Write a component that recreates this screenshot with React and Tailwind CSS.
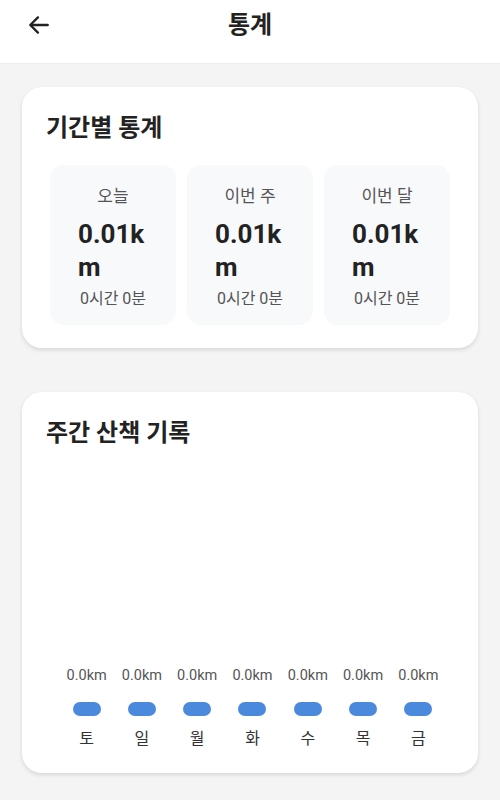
import React from "react";

const font = { fontFamily: "Roboto, 'Noto Sans CJK KR', sans-serif" };

const periods = [
    { label: "오늘", distance: "0.01km", time: "0시간 0분" },
    { label: "이번 주", distance: "0.01km", time: "0시간 0분" },
    { label: "이번 달", distance: "0.01km", time: "0시간 0분" },
];

const days = ["토", "일", "월", "화", "수", "목", "금"];

const PeriodBox = ({ label, distance, time }) => (
    <div className="flex flex-col items-center bg-[#f8f9fb] rounded-[14px] px-[28px] pt-[19px] pb-[15px]">
        <span className="text-[17px] leading-[24px] text-[#555]">{label}</span>
        <span className="mt-[10px] text-[26px] leading-[33px] font-bold text-[#222] break-all">
            {distance}
        </span>
        <span className="mt-[4px] text-[16px] leading-[22px] text-[#555] whitespace-nowrap">{time}</span>
    </div>
);

const App = () => {
    return (
        <div className="min-h-[800px] bg-[#f4f4f4]" style={font}>
            {/* Header */}
            <header className="relative h-[64px] bg-white border-b border-[#ececec] flex items-center justify-center">
                <button className="absolute left-[26px] top-[12px] text-[#222]">
                    <svg width="26" height="26" viewBox="0 0 24 24" fill="none" stroke="currentColor" strokeWidth="2.2" strokeLinecap="round" strokeLinejoin="round">
                        <path d="M20 12H4.5" />
                        <path d="M11 5l-7 7 7 7" />
                    </svg>
                </button>
                <h1 className="text-[24px] leading-[32px] font-bold text-[#222] -mt-[13px]">통계</h1>
            </header>

            <main className="px-[22px] pt-[23px] flex flex-col gap-[44px]">
                {/* 기간별 통계 */}
                <section className="bg-white rounded-[20px] shadow-[0_2px_4px_rgba(0,0,0,0.12)] px-[24px] pt-[25px] pb-[23px]">
                    <h2 className="text-[24px] leading-[32px] font-bold text-[#222]">기간별 통계</h2>
                    <div className="mt-[21px] mx-[4px] grid grid-cols-3 gap-[11px]">
                        {periods.map((p) => (
                            <PeriodBox key={p.label} {...p} />
                        ))}
                    </div>
                </section>

                {/* 주간 산책 기록 */}
                <section className="bg-white rounded-[20px] shadow-[0_2px_4px_rgba(0,0,0,0.12)] px-[24px] pt-[25px] pb-[24px]">
                    <h2 className="text-[24px] leading-[32px] font-bold text-[#222]">주간 산책 기록</h2>
                    <div className="h-[300px] pl-[13px] pr-[8px] grid grid-cols-7 items-end">
                        {days.map((d) => (
                            <div key={d} className="flex flex-col items-center">
                                <span className="text-[14.5px] leading-[18px] text-[#555]">0.0km</span>
                                <div className="mt-[17px] w-[28px] h-[14px] rounded-full bg-[#4a89dc]" />
                                <span className="mt-[12px] text-[16px] leading-[21px] text-[#333]">{d}</span>
                            </div>
                        ))}
                    </div>
                </section>
            </main>
        </div>
    );
};

export default App;
